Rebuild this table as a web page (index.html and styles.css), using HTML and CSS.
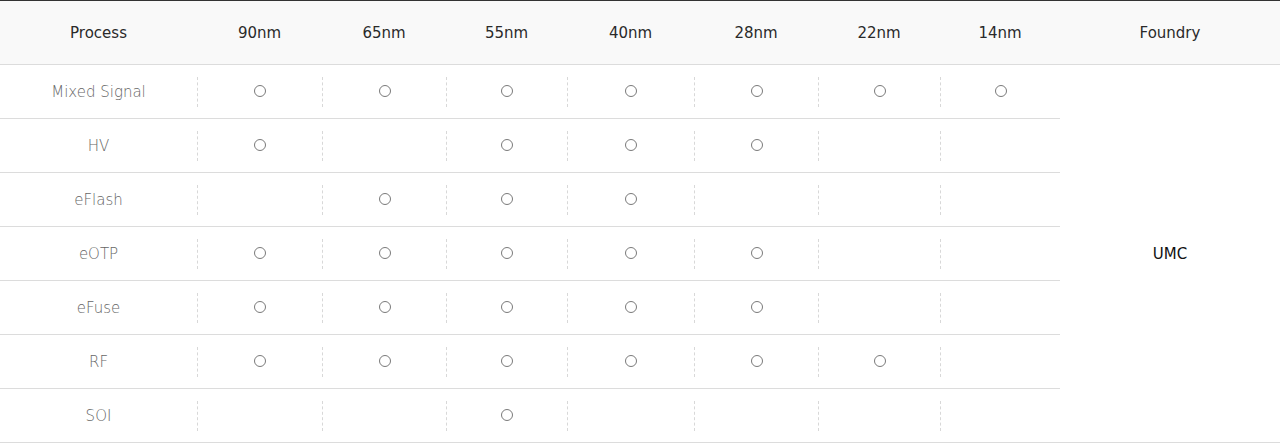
FILE: index.html
```html
<!DOCTYPE html>
<html lang="en">
<head>
<meta charset="utf-8">
<title>Process table</title>
<link rel="stylesheet" href="styles.css">
</head>
<body>
<table class="proc">
  <colgroup>
    <col class="c-name"><col class="c-90"><col class="c-65"><col class="c-55"><col class="c-40"><col class="c-28"><col class="c-22"><col class="c-14"><col class="c-fab">
  </colgroup>
  <thead>
    <tr>
      <th>Process</th><th>90nm</th><th>65nm</th><th>55nm</th><th>40nm</th><th>28nm</th><th>22nm</th><th>14nm</th><th>Foundry</th>
    </tr>
  </thead>
  <tbody>
    <tr>
      <td class="name">Mixed Signal</td>
      <td><div class="mark"><span class="dot"></span></div></td>
      <td><div class="mark"><span class="dot"></span></div></td>
      <td><div class="mark"><span class="dot"></span></div></td>
      <td><div class="mark"><span class="dot"></span></div></td>
      <td><div class="mark"><span class="dot"></span></div></td>
      <td><div class="mark"><span class="dot"></span></div></td>
      <td><div class="mark"><span class="dot"></span></div></td>
      <td class="fab" rowspan="7">UMC</td>
    </tr>
    <tr>
      <td class="name">HV</td>
      <td><div class="mark"><span class="dot"></span></div></td>
      <td><div class="mark"></div></td>
      <td><div class="mark"><span class="dot"></span></div></td>
      <td><div class="mark"><span class="dot"></span></div></td>
      <td><div class="mark"><span class="dot"></span></div></td>
      <td><div class="mark"></div></td>
      <td><div class="mark"></div></td>
    </tr>
    <tr>
      <td class="name">eFlash</td>
      <td><div class="mark"></div></td>
      <td><div class="mark"><span class="dot"></span></div></td>
      <td><div class="mark"><span class="dot"></span></div></td>
      <td><div class="mark"><span class="dot"></span></div></td>
      <td><div class="mark"></div></td>
      <td><div class="mark"></div></td>
      <td><div class="mark"></div></td>
    </tr>
    <tr>
      <td class="name">eOTP</td>
      <td><div class="mark"><span class="dot"></span></div></td>
      <td><div class="mark"><span class="dot"></span></div></td>
      <td><div class="mark"><span class="dot"></span></div></td>
      <td><div class="mark"><span class="dot"></span></div></td>
      <td><div class="mark"><span class="dot"></span></div></td>
      <td><div class="mark"></div></td>
      <td><div class="mark"></div></td>
    </tr>
    <tr>
      <td class="name">eFuse</td>
      <td><div class="mark"><span class="dot"></span></div></td>
      <td><div class="mark"><span class="dot"></span></div></td>
      <td><div class="mark"><span class="dot"></span></div></td>
      <td><div class="mark"><span class="dot"></span></div></td>
      <td><div class="mark"><span class="dot"></span></div></td>
      <td><div class="mark"></div></td>
      <td><div class="mark"></div></td>
    </tr>
    <tr>
      <td class="name">RF</td>
      <td><div class="mark"><span class="dot"></span></div></td>
      <td><div class="mark"><span class="dot"></span></div></td>
      <td><div class="mark"><span class="dot"></span></div></td>
      <td><div class="mark"><span class="dot"></span></div></td>
      <td><div class="mark"><span class="dot"></span></div></td>
      <td><div class="mark"><span class="dot"></span></div></td>
      <td><div class="mark"></div></td>
    </tr>
    <tr>
      <td class="name">SOI</td>
      <td><div class="mark"></div></td>
      <td><div class="mark"></div></td>
      <td><div class="mark"><span class="dot"></span></div></td>
      <td><div class="mark"></div></td>
      <td><div class="mark"></div></td>
      <td><div class="mark"></div></td>
      <td><div class="mark"></div></td>
    </tr>
  </tbody>
</table>
</body>
</html>
```

FILE: styles.css
```css
html, body {
  margin: 0;
  padding: 0;
  background: #fff;
}

.proc {
  width: 1280px;
  table-layout: fixed;
  border-collapse: separate;
  border-spacing: 0;
  border-top: 1px solid #333;
  font-family: "DejaVu Sans", "Liberation Sans", sans-serif;
  font-size: 15px;
}

.c-name { width: 197px; }
.c-90 { width: 125px; }
.c-65 { width: 124px; }
.c-55 { width: 121px; }
.c-40 { width: 127px; }
.c-28 { width: 124px; }
.c-22 { width: 122px; }
.c-14 { width: 120px; }
.c-fab { width: 220px; }

.proc th {
  box-sizing: border-box;
  height: 64px;
  padding: 0;
  background: #f9f9f9;
  border-bottom: 1px solid #dcdcdc;
  font-weight: 400;
  color: #2a2a2a;
  text-align: center;
  vertical-align: middle;
}

.proc td {
  box-sizing: border-box;
  height: 54px;
  padding: 0;
  border-bottom: 1px solid #dcdcdc;
  text-align: center;
  vertical-align: middle;
  color: #8a8a8a;
}

.proc td.name {
  font-weight: 300;
  color: #666;
}

.proc td.fab {
  color: #111;
}

.mark {
  height: 30px;
  border-left: 1px dashed #d8d8d8;
  display: flex;
  align-items: center;
  justify-content: center;
}

.dot {
  box-sizing: border-box;
  width: 12px;
  height: 12px;
  margin-top: -1px;
  border: 1px solid #7a7a7a;
  border-radius: 50%;
}
```
